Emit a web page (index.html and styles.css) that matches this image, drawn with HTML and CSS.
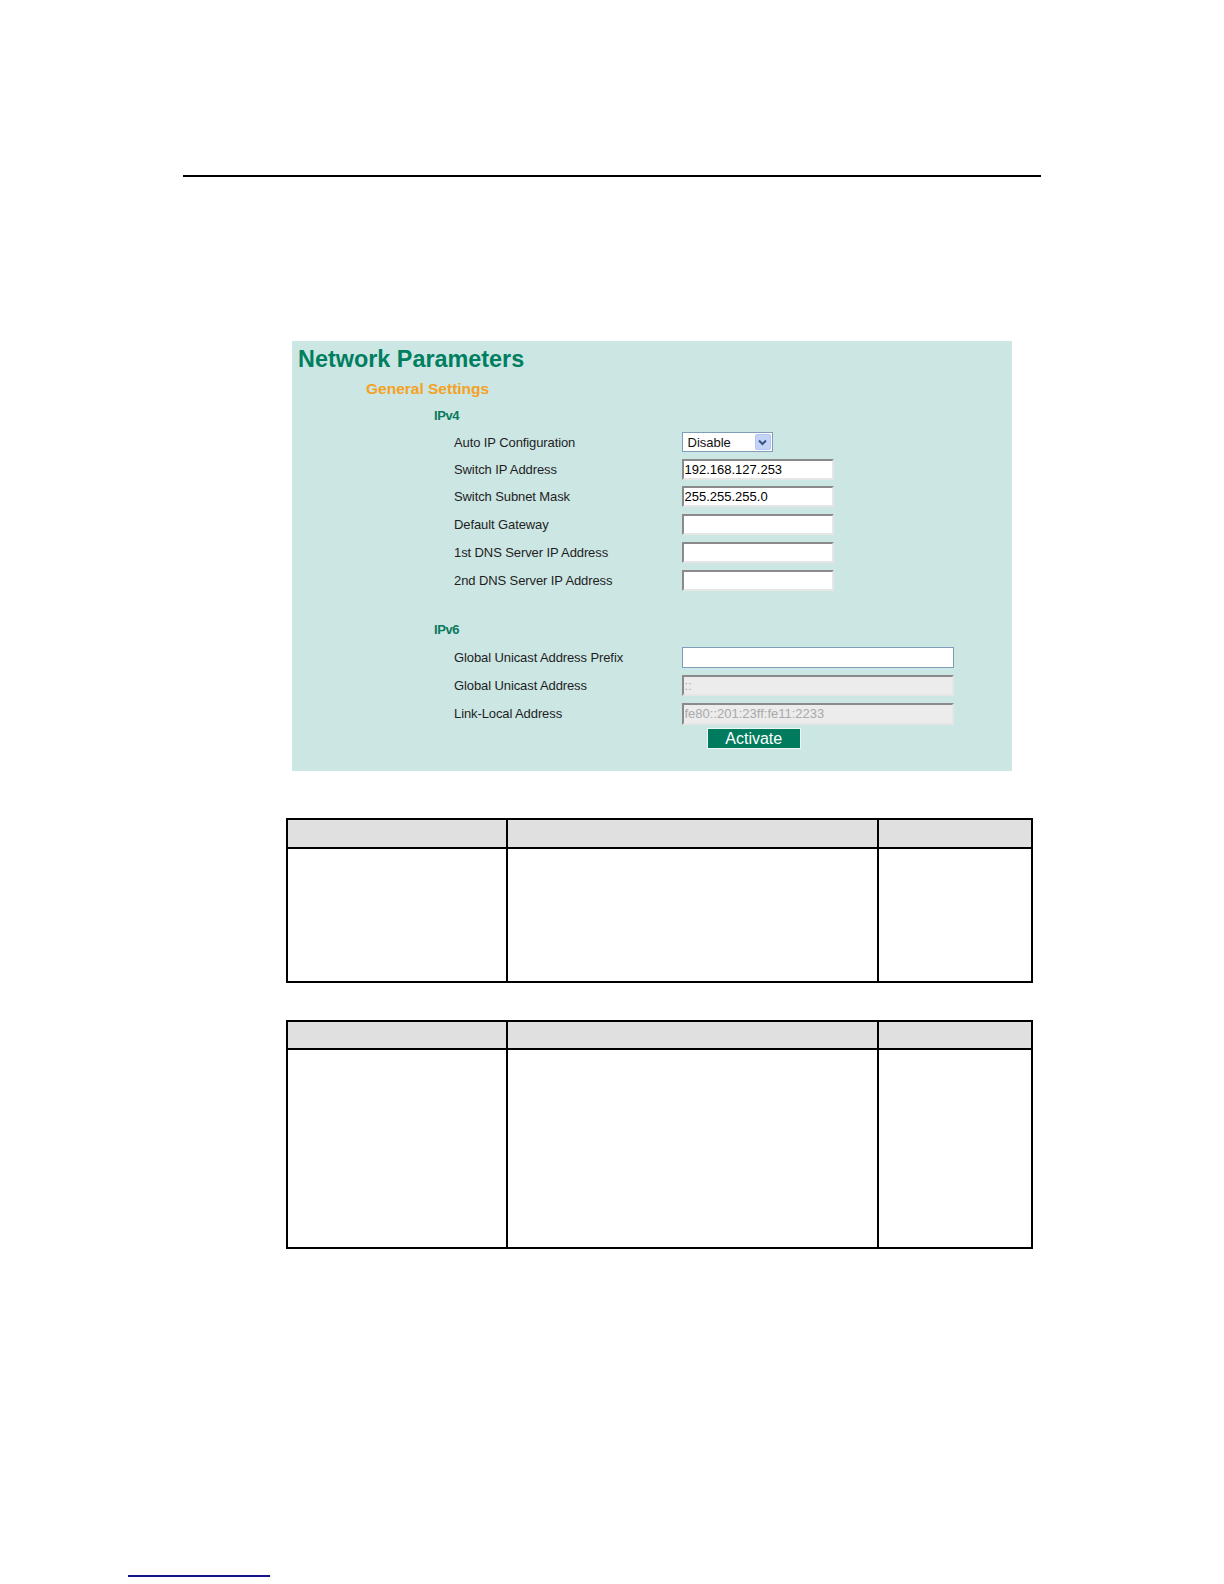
FILE: index.html
```html
<!DOCTYPE html>
<html lang="en">
<head>
<meta charset="utf-8">
<title>Network Parameters</title>
<link rel="stylesheet" href="styles.css">
</head>
<body>
<div class="page">
  <div class="top-rule"></div>

  <section class="panel">
    <h1 class="title">Network Parameters</h1>
    <h2 class="subtitle">General Settings</h2>

    <h3 class="group">IPv4</h3>
    <div class="rows rows-v4">
      <div class="row row-first">
        <span class="label">Auto IP Configuration</span>
        <div class="select">
          <span class="select-text">Disable</span>
          <span class="select-btn">
            <svg width="9" height="7" viewBox="0 0 9 7"><path d="M1 1.5 L4.5 5 L8 1.5" fill="none" stroke="#3c5386" stroke-width="2"/></svg>
          </span>
        </div>
      </div>
      <div class="row">
        <span class="label">Switch IP Address</span>
        <input class="field field-short" type="text" value="192.168.127.253">
      </div>
      <div class="row">
        <span class="label">Switch Subnet Mask</span>
        <input class="field field-short" type="text" value="255.255.255.0">
      </div>
      <div class="row">
        <span class="label">Default Gateway</span>
        <input class="field field-short" type="text" value="">
      </div>
      <div class="row">
        <span class="label">1st DNS Server IP Address</span>
        <input class="field field-short" type="text" value="">
      </div>
      <div class="row">
        <span class="label">2nd DNS Server IP Address</span>
        <input class="field field-short" type="text" value="">
      </div>
    </div>

    <h3 class="group group-v6">IPv6</h3>
    <div class="rows rows-v6">
      <div class="row">
        <span class="label">Global Unicast Address Prefix</span>
        <input class="field field-long field-xp" type="text" value="">
      </div>
      <div class="row">
        <span class="label">Global Unicast Address</span>
        <input class="field field-long field-disabled" type="text" value="::" disabled>
      </div>
      <div class="row">
        <span class="label">Link-Local Address</span>
        <input class="field field-long field-disabled" type="text" value="fe80::201:23ff:fe11:2233" disabled>
      </div>
    </div>

    <button class="activate" type="button">Activate</button>
  </section>

  <div class="grid grid-1">
    <div class="cell head"></div>
    <div class="cell head"></div>
    <div class="cell head"></div>
    <div class="cell"></div>
    <div class="cell"></div>
    <div class="cell"></div>
  </div>

  <div class="grid grid-2">
    <div class="cell head"></div>
    <div class="cell head"></div>
    <div class="cell head"></div>
    <div class="cell"></div>
    <div class="cell"></div>
    <div class="cell"></div>
  </div>

  <div class="footnote-rule"></div>
</div>
</body>
</html>
```

FILE: styles.css
```css
html, body {
  margin: 0;
  padding: 0;
  background: #ffffff;
}

.page {
  width: 1224px;
  height: 1584px;
  font-family: "Liberation Sans", Arial, sans-serif;
  overflow: hidden;
}

.top-rule {
  margin-top: 175px;
  margin-left: 183px;
  width: 858px;
  height: 2px;
  background: #000000;
}

.panel {
  box-sizing: border-box;
  margin-top: 164px;
  margin-left: 292px;
  width: 720px;
  height: 430px;
  background: #cce6e4;
  padding-top: 5px;
  display: flex;
  flex-direction: column;
  align-items: flex-start;
}

.title {
  margin: 0 0 0 6px;
  font-size: 23.4px;
  line-height: 26px;
  font-weight: bold;
  color: #007f60;
}

.subtitle {
  margin: 6.5px 0 0 74px;
  font-size: 15.5px;
  line-height: 20px;
  font-weight: bold;
  color: #f5a123;
}

.group {
  margin: 8.6px 0 0 142px;
  font-size: 13px;
  line-height: 18px;
  font-weight: bold;
  letter-spacing: -0.4px;
  color: #0a7a5c;
}

.group-v6 {
  margin-top: 26.3px;
}

.rows {
  margin-left: 162px;
  display: flex;
  flex-direction: column;
}

.rows-v4 {
  margin-top: 4.4px;
}

.rows-v6 {
  margin-top: 4.4px;
}

.row {
  display: flex;
  align-items: center;
  height: 27.9px;
}

.row-first {
  height: 25.6px;
}

.rows-v6 .row {
  height: 28.3px;
}

.label {
  width: 227.5px;
  flex: none;
  font-size: 13px;
  letter-spacing: -0.1px;
  color: #1e1e1e;
}

.select {
  box-sizing: border-box;
  width: 91px;
  height: 20px;
  border: 1px solid #7f9db9;
  background: #ffffff;
  display: flex;
  align-items: center;
  justify-content: space-between;
  padding: 1px;
}

.select-text {
  font-size: 13px;
  color: #111111;
  padding-left: 4px;
}

.select-btn {
  box-sizing: border-box;
  width: 16px;
  height: 16px;
  background: #c3d3f6;
  border: 1px solid #b3c6ee;
  border-radius: 2px;
  display: flex;
  align-items: center;
  justify-content: center;
}

.field {
  box-sizing: border-box;
  height: 21px;
  margin: 0;
  padding: 0 1px;
  font-family: "Liberation Sans", Arial, sans-serif;
  font-size: 13px;
  color: #000000;
  background: #ffffff;
  border-style: solid;
  border-width: 2px;
  border-color: #8a8a8a #e6e6e6 #e6e6e6 #8a8a8a;
  outline: none;
}

.field-short {
  width: 152px;
}

.field-long {
  width: 272px;
  height: 21.5px;
}

.field-xp {
  border: 1px solid #7f9db9;
}

.field-disabled {
  background: #ececec;
  color: #a9a9a9;
  -webkit-text-fill-color: #a9a9a9;
  opacity: 1;
}

.activate {
  box-sizing: border-box;
  margin: 0 0 0 414.5px;
  width: 94.5px;
  height: 20.5px;
  padding: 0;
  background: #007b5d;
  border: 1.5px solid #eef6f4;
  color: #ffffff;
  font-family: "Liberation Sans", Arial, sans-serif;
  font-size: 16px;
  line-height: 17px;
  cursor: pointer;
}

.grid {
  box-sizing: border-box;
  margin-left: 286px;
  width: 747px;
  padding: 2px;
  gap: 2px;
  background: #000000;
  display: grid;
  grid-template-columns: 218px 369px 152px;
}

.grid-1 {
  margin-top: 47px;
  grid-template-rows: 27px 132px;
}

.grid-2 {
  margin-top: 37px;
  grid-template-rows: 26px 197px;
}

.cell {
  background: #ffffff;
}

.cell.head {
  background: #e0e0e0;
}

.footnote-rule {
  margin-top: 326px;
  margin-left: 128px;
  width: 142px;
  height: 1.5px;
  background: #14148a;
}
```
